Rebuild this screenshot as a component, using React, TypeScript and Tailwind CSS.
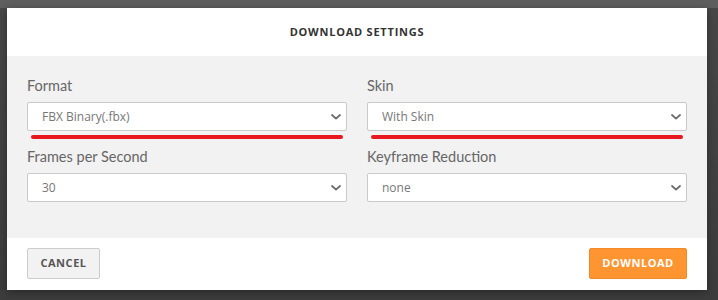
import React from 'react';

const ChevronDown: React.FC = () => (
  <svg width="10" height="6" viewBox="0 0 10 6" className="shrink-0">
    <path d="M1 1l4 3.6L9 1" fill="none" stroke="#6b6b6b" strokeWidth="1.8" strokeLinecap="round" strokeLinejoin="round" />
  </svg>
);

interface FieldProps {
  label: string;
  value: string;
  underline?: boolean;
}

const Field: React.FC<FieldProps> = ({ label, value, underline }) => (
  <div className="flex flex-col">
    <label className="text-[14.5px] leading-[20px] text-[#666] font-['Lato',sans-serif]">{label}</label>
    <div className="mt-[6px] h-[29px] flex items-center justify-between bg-white border border-[#c9c9c9] rounded-[2px] pl-[14px] pr-[5px]">
      <span className="text-[12px] text-[#777]">{value}</span>
      <ChevronDown />
    </div>
    {underline && <div className="mt-[4px] mx-[4px] h-[4px] rounded-full bg-[#e8161e]" />}
    {underline && <div className="h-[8px]" />}
  </div>
);

const App: React.FC = () => {
  return (
    <div
      className="w-[718px] h-[300px] overflow-hidden pt-[8px] pl-[7px] bg-[linear-gradient(180deg,#5e5e5e_0px,#5e5e5e_8px,#474747_8px,#3c3c3c_100%)]"
      style={{ fontFamily: '"Open Sans", "Noto Sans", sans-serif' }}
    >
      <div className="w-[700px] h-[282px] bg-white flex flex-col shadow-[0_2px_8px_rgba(0,0,0,0.35)]">
        <div className="h-[48px] flex items-center justify-center">
          <h2 className="text-[11px] font-bold tracking-[0.07em] text-[#333]">DOWNLOAD SETTINGS</h2>
        </div>

        <div className="h-[182px] bg-[#f2f2f2] px-[20px] pt-[20px] grid grid-cols-2 gap-x-[20px] content-start">
          <Field label="Format" value="FBX Binary(.fbx)" underline />
          <Field label="Skin" value="With Skin" underline />
          <Field label="Frames per Second" value="30" />
          <Field label="Keyframe Reduction" value="none" />
        </div>

        <div className="flex-1 flex items-start justify-between px-[20px] pt-[10px]">
          <button className="h-[31px] w-[73px] bg-[#f2f2f2] border border-[#cccccc] rounded-[2px] text-[11px] font-bold tracking-[0.05em] text-[#555]">
            CANCEL
          </button>
          <button className="h-[31px] w-[98px] bg-[#ff9531] border border-[#f08a28] rounded-[2px] text-[11px] font-bold tracking-[0.05em] text-white">
            DOWNLOAD
          </button>
        </div>
      </div>
    </div>
  );
};

export default App;
